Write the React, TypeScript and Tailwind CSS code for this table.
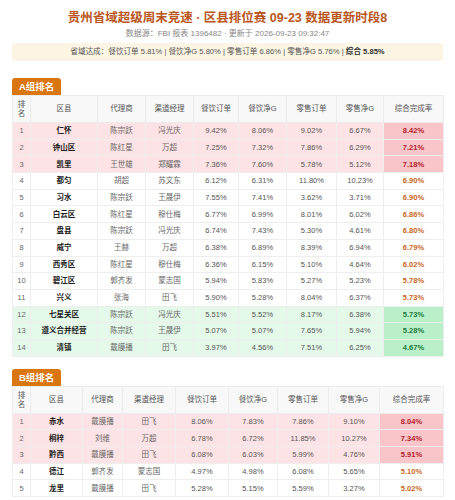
type Row = [string, string, string, string, string, string, string, string];

const groupA: Row[] = [
  ["仁怀", "陈宗跃", "冯光庆", "9.42%", "8.06%", "9.02%", "6.67%", "8.42%"],
  ["钟山区", "陈红星", "万超", "7.25%", "7.32%", "7.86%", "6.29%", "7.21%"],
  ["凯里", "王世雄", "郑耀霖", "7.36%", "7.60%", "5.78%", "5.12%", "7.18%"],
  ["都匀", "胡超", "苏文东", "6.12%", "6.31%", "11.80%", "10.23%", "6.90%"],
  ["习水", "陈宗跃", "王晟伊", "7.55%", "7.41%", "3.62%", "3.71%", "6.90%"],
  ["白云区", "陈红星", "穆仕梅", "6.77%", "6.99%", "8.01%", "6.02%", "6.86%"],
  ["盘县", "陈宗跃", "冯光庆", "6.74%", "7.43%", "5.30%", "4.61%", "6.80%"],
  ["威宁", "王赫", "万超", "6.38%", "6.89%", "8.39%", "6.94%", "6.79%"],
  ["西秀区", "陈红星", "穆仕梅", "6.36%", "6.15%", "5.10%", "4.64%", "6.02%"],
  ["碧江区", "郭齐发", "蒙志国", "5.94%", "5.83%", "5.27%", "5.23%", "5.78%"],
  ["兴义", "张海", "田飞", "5.90%", "5.28%", "8.04%", "6.37%", "5.73%"],
  ["七星关区", "陈宗跃", "冯光庆", "5.51%", "5.52%", "8.17%", "6.38%", "5.73%"],
  ["遵义合并经营", "陈宗跃", "王晟伊", "5.07%", "5.07%", "7.65%", "5.94%", "5.28%"],
  ["清镇", "戴膜播", "田飞", "3.97%", "4.56%", "7.51%", "6.25%", "4.67%"],
];

const groupB: Row[] = [
  ["赤水", "戴膜播", "田飞", "8.06%", "7.83%", "7.86%", "9.10%", "8.04%"],
  ["桐梓", "刘维", "万超", "6.78%", "6.72%", "11.85%", "10.27%", "7.34%"],
  ["黔西", "戴膜播", "田飞", "6.08%", "6.03%", "5.99%", "4.76%", "5.91%"],
  ["德江", "郭齐发", "蒙志国", "4.97%", "4.98%", "6.08%", "5.65%", "5.10%"],
  ["龙里", "戴膜播", "田飞", "5.28%", "5.15%", "5.59%", "3.27%", "5.02%"],
];

const heads = ["区县", "代理商", "渠道经理", "餐饮订单", "餐饮净G", "零售订单", "零售净G", "综合完成率"];

function RankTable({ title, rows, widths }: { title: string; rows: Row[]; widths: number[] }) {
  const n = rows.length;
  return (
    <div>
      <div className="w-fit rounded-t-[3px] bg-[#d9760f] px-[7px] py-[2px] text-[9.5px] font-bold leading-[13px] text-white">
        {title}
      </div>
      <table className="w-full table-fixed border-collapse border border-[#ececec] text-[7.5px]">
        <colgroup>
          {widths.map((w, i) => (
            <col key={i} style={{ width: w }} />
          ))}
        </colgroup>
        <thead>
          <tr className="bg-[#f8f8f8] text-[#555]">
            <th className="h-[27px] border border-[#ececec] p-0 font-normal leading-[9px]">
              排<br />名
            </th>
            {heads.map((h) => (
              <th key={h} className="border border-[#ececec] p-0 font-normal">
                {h}
              </th>
            ))}
          </tr>
        </thead>
        <tbody>
          {rows.map((r, i) => {
            const top = i < 3;
            const bottom = n > 5 && i >= n - 3;
            const rowBg = top ? "bg-[#fde3e5]" : bottom ? "bg-[#e4f9ea]" : "bg-white";
            const lastCls = top
              ? "bg-[#f9c5c9] text-[#b3202a]"
              : bottom
              ? "bg-[#b9f0c9] text-[#1e7a3c]"
              : "text-[#c8661c]";
            return (
              <tr key={i} className={rowBg}>
                <td className="h-[16.7px] border border-[#eeeeee] p-0 text-center text-[#666]">{i + 1}</td>
                <td className="border border-[#eeeeee] p-0 text-center font-bold text-[#222]">{r[0]}</td>
                <td className="border border-[#eeeeee] p-0 text-center text-[#666]">{r[1]}</td>
                <td className="border border-[#eeeeee] p-0 text-center text-[#666]">{r[2]}</td>
                {r.slice(3, 7).map((v, j) => (
                  <td key={j} className="border border-[#eeeeee] p-0 text-center text-[#555]">
                    {v}
                  </td>
                ))}
                <td className={`border border-[#eeeeee] p-0 text-center font-bold ${lastCls}`}>{r[7]}</td>
              </tr>
            );
          })}
        </tbody>
      </table>
    </div>
  );
}

export default function App() {
  return (
    <div
      className="min-h-[500px] bg-white px-[12px] pt-[9px]"
      style={{ fontFamily: '"Liberation Sans", "Noto Sans CJK SC", sans-serif' }}
    >
      <h1 className="text-center text-[12.5px] font-bold leading-[18px] text-[#b9561c]">
        贵州省域超级周末竞速 · 区县排位赛 09-23 数据更新时段8
      </h1>
      <p className="mt-[1px] text-center text-[8px] leading-[11px] text-[#888]">
        数据源：FBI 报表 1396482 · 更新于 2026-09-23 09:32:47
      </p>
      <div className="mt-[4px] rounded-[3px] bg-[#fdf5e3] py-[4px] text-center text-[7.6px] leading-[10px] text-[#555]">
        省域达成：餐饮订单 5.81% | 餐饮净G 5.80% | 零售订单 6.86% | 零售净G 5.76% |{" "}
        <span className="font-bold text-[#333]">综合 5.85%</span>
      </div>
      <div className="mt-[17px] flex flex-col gap-[12px]">
        <RankTable title="A组排名" rows={groupA} widths={[18, 67, 48, 48, 45, 48, 50, 47, 60]} />
        <RankTable title="B组排名" rows={groupB} widths={[18, 52, 40, 53, 53, 49, 51, 51, 64]} />
      </div>
    </div>
  );
}
